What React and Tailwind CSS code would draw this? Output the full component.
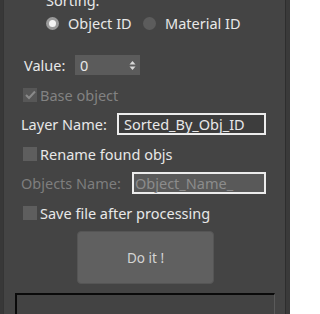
export default function App() {
    return (
        <div className="w-[290px] h-[314px] overflow-hidden bg-[#3c3c3c] flex" style={{ fontFamily: '"Noto Sans", "Open Sans", sans-serif' }}>
            <div className="w-[4px] bg-[#383838] border-r border-[#353535]" />
            <div className="flex-1 bg-[#444444] border-r border-[#2e2e2e] flex flex-col text-[14.5px] leading-[20px] text-[#e8e8e8]">
                <div className="ml-[42px] -mt-[8px] h-[17px] leading-[17px]">Sorting:</div>

                <div className="flex items-center ml-[42px] mt-[4px] h-[20px]">
                    <span className="w-[13px] h-[13px] rounded-full bg-[#9a9a9a] flex items-center justify-center">
                        <span className="w-[7px] h-[7px] rounded-full bg-[#f4f4f4]" />
                    </span>
                    <span className="ml-[9px] w-[75px]">Object ID</span>
                    <span className="w-[13px] h-[13px] rounded-full bg-[#5c5c5c]" />
                    <span className="ml-[9px]">Material ID</span>
                </div>

                <div className="flex items-center ml-[20px] mt-[22px] h-[20px]">
                    <span className="w-[51px]">Value:</span>
                    <div className="w-[65px] h-[20px] bg-[#5b5b5b] flex items-center justify-between pl-[5px] pr-[4px]">
                        <span>0</span>
                        <svg width="7" height="11" viewBox="0 0 7 11">
                            <path d="M3.5 1 L6.5 4.5 L0.5 4.5 Z" fill="#d8d8d8" />
                            <path d="M3.5 10 L6.5 6.5 L0.5 6.5 Z" fill="#d8d8d8" />
                        </svg>
                    </div>
                </div>

                <div className="flex items-center ml-[19px] mt-[12px] h-[15px] text-[#828282]">
                    <span className="w-[14px] h-[14px] bg-[#575757] flex items-center justify-center">
                        <svg width="11" height="10" viewBox="0 0 11 10">
                            <path d="M1 5 L4 8 L10 1.5" stroke="#8a8a8a" strokeWidth="2" fill="none" />
                        </svg>
                    </span>
                    <span className="ml-[3px]">Base object</span>
                </div>

                <div className="flex items-center ml-[17px] mt-[11px] h-[22px]">
                    <span className="w-[96px]">Layer Name:</span>
                    <div className="w-[149px] h-[22px] border-2 border-[#ececec] bg-[#3d3d3d] flex items-center pl-[5px]">
                        Sorted_By_Obj_ID
                    </div>
                </div>

                <div className="flex items-center ml-[19px] mt-[11px] h-[15px]">
                    <span className="w-[14px] h-[14px] bg-[#5e5e5e]" />
                    <span className="ml-[3px]">Rename found objs</span>
                </div>

                <div className="flex items-center ml-[17px] mt-[11px] h-[22px] text-[#7e7e7e]">
                    <span className="w-[111px]">Objects Name:</span>
                    <div className="w-[134px] h-[22px] border-2 border-[#ececec] bg-[#595959] flex items-center pl-[1px] text-[#8c8c8c]">
                        Object_Name_
                    </div>
                </div>

                <div className="flex items-center ml-[19px] mt-[11px] h-[15px]">
                    <span className="w-[14px] h-[14px] bg-[#5e5e5e]" />
                    <span className="ml-[3px]">Save file after processing</span>
                </div>

                <div className="ml-[73px] mt-[11px] w-[137px] h-[53px] shrink-0 rounded-[4px] bg-[#606060] border border-[#555555] flex items-center justify-center text-[13.5px] text-[#d4d4d4]">
                    Do it !
                </div>

                <div className="ml-[11px] mt-[9px] w-[260px] h-[30px] shrink-0 border-t-2 border-l-2 border-[#0a0a0a] border-r border-r-[#5a5a5a] bg-[#434343]" />
            </div>
            <div className="w-[4px] bg-[#3a3a3a]" />
        </div>
    )
}
